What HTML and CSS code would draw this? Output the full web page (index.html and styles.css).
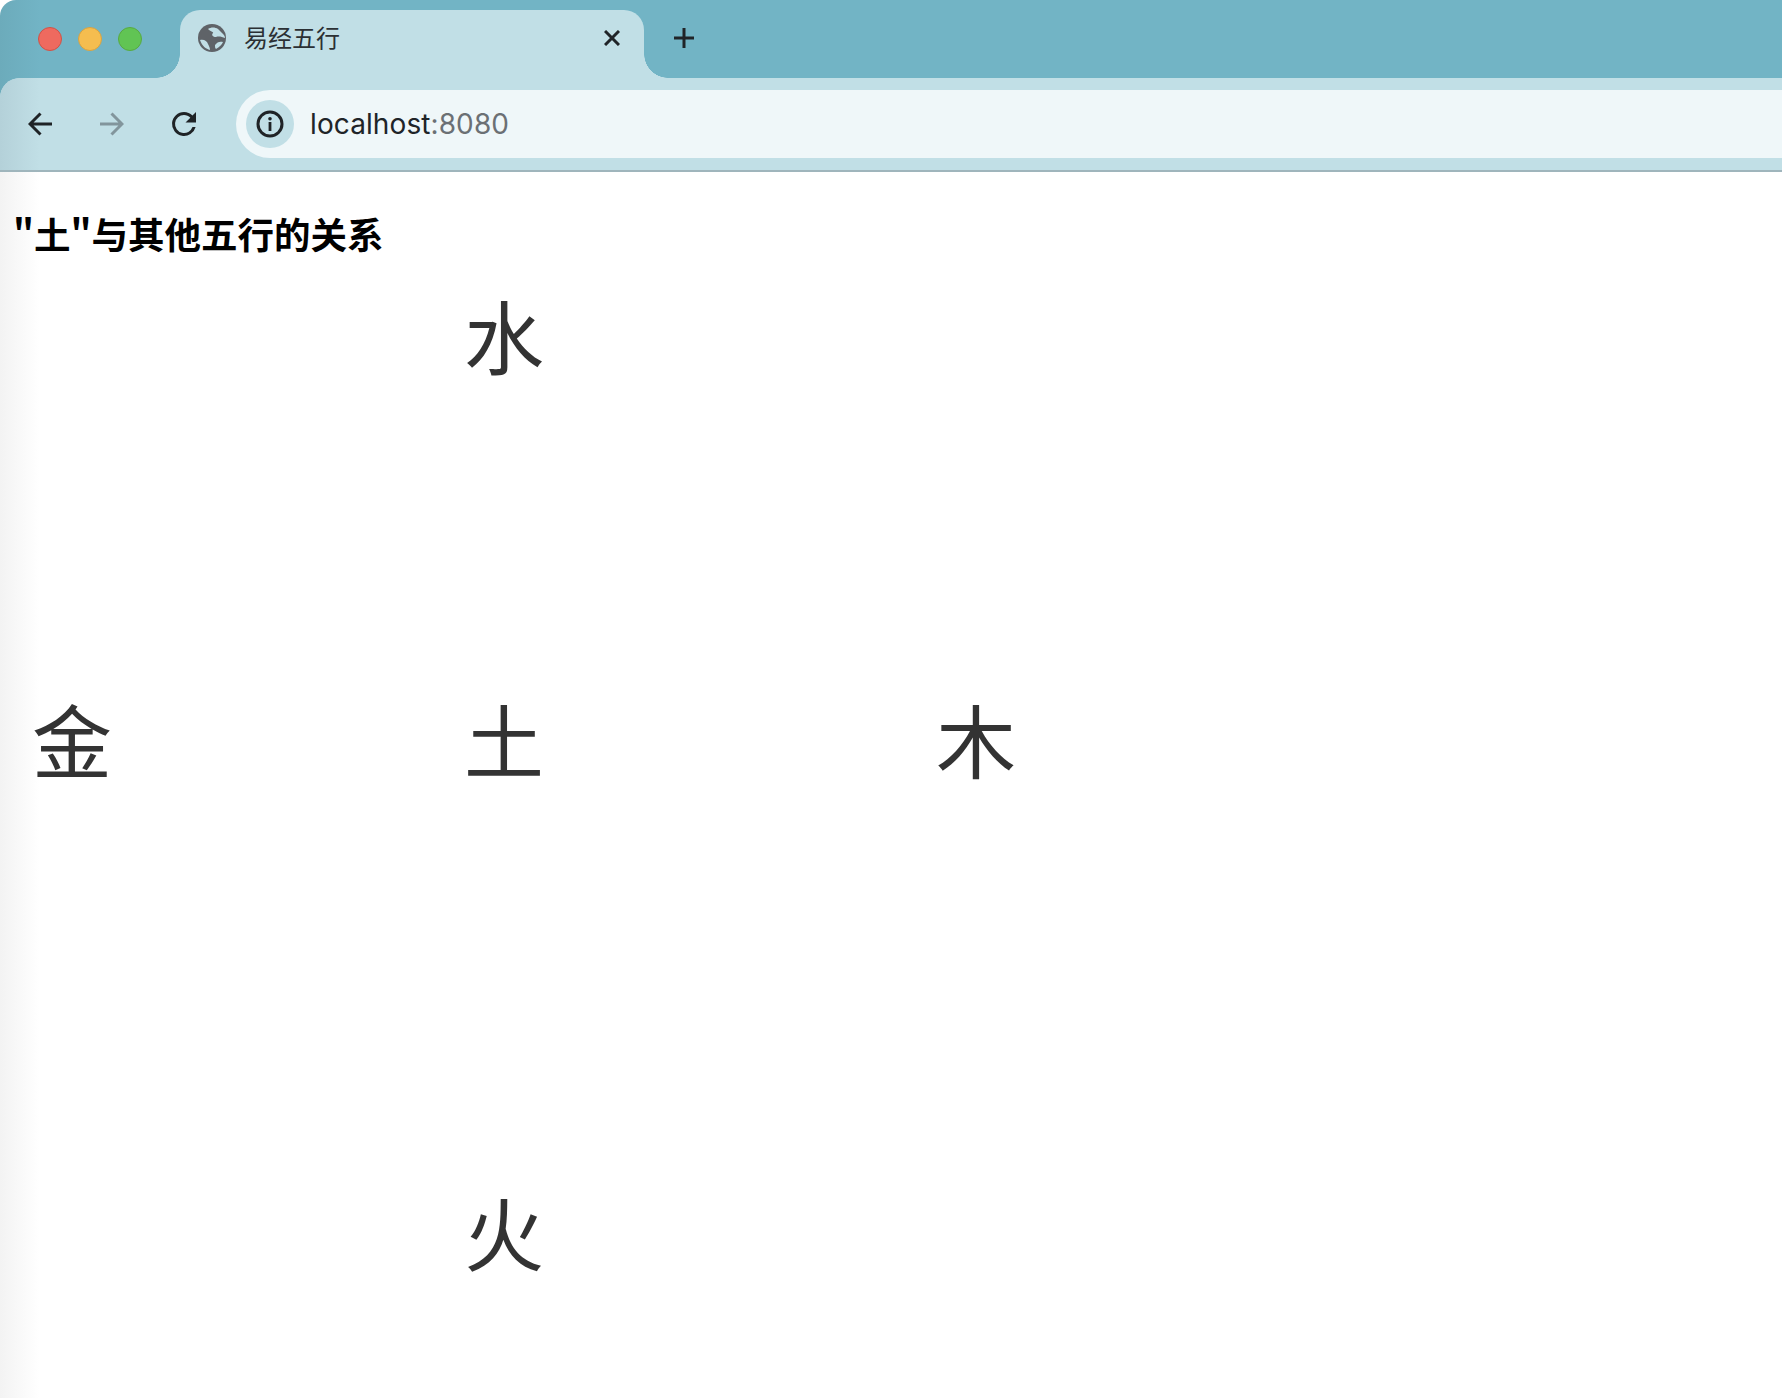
FILE: index.html
```html
<!DOCTYPE html>
<html lang="zh-CN">
<head>
  <meta charset="UTF-8">
  <title>易经五行</title>
  <link rel="stylesheet" href="styles.css">
</head>
<body>

  <header class="browser">
    <div class="strip">
      <div class="lights">
        <span class="light red"></span>
        <span class="light yellow"></span>
        <span class="light green"></span>
      </div>
      <div class="tab">
        <svg class="globe" viewBox="0 0 28 28">
          <circle cx="14" cy="14" r="14" fill="#5f6368"/>
          <path d="M10 5c3-2 7-2 10 0l4 4c2 2 3 3 3 5-3-1-6-2-9-1-3 0-5-2-3-4 1-1-2-1-5-4z" fill="#c1dfe6"/>
          <path d="M2 16c4-1 7 1 8 4 1 2 2 4 2 6-4-1-8-4-10-10z" fill="#c1dfe6"/>
          <path d="M17 21c2-3 5-4 8-3-1 2-3 5-7 7-1-1-1-2-1-4z" fill="#c1dfe6"/>
        </svg>
        <span class="tab-title">易经五行</span>
        <svg class="close" viewBox="0 0 16 16">
          <path d="M1 1l14 14M15 1L1 15"/>
        </svg>
      </div>
      <svg class="plus" viewBox="0 0 20 20">
        <path d="M10 0v20M0 10h20"/>
      </svg>
    </div>

    <div class="toolbar">
      <div class="nav-btn">
        <svg viewBox="0 0 24 24"><path d="M24 12H2M12.500 1.500L2 12l10.500 10.500"/></svg>
      </div>
      <div class="nav-btn off">
        <svg viewBox="0 0 24 24"><path d="M0 12h22M11.500 1.500L22 12 11.500 22.500"/></svg>
      </div>
      <div class="nav-btn">
        <svg class="reload" viewBox="0 0 24 24"><path d="M17.650 6.350A7.950 7.950 0 0 0 12 4a8 8 0 1 0 7.750 10h-2.080A6 6 0 1 1 12 6c1.660 0 3.140.69 4.220 1.780L13 11h7V4l-2.350 2.350z"/></svg>
      </div>
      <div class="address">
        <div class="info">
          <svg viewBox="0 0 28 28">
            <circle cx="14" cy="14" r="12" fill="none" stroke="#1f2326" stroke-width="3"/>
            <circle cx="14" cy="8.800" r="1.800" fill="#1f2326"/>
            <rect x="12.600" y="12" width="2.800" height="9" fill="#1f2326"/>
          </svg>
        </div>
        <span class="host">localhost<em>:8080</em></span>
      </div>
    </div>
  </header>

  <main class="page">
    <h2 class="title">"土"与其他五行的关系</h2>
    <div class="node shui">水</div>
    <div class="node jin">金</div>
    <div class="node tu">土</div>
    <div class="node mu">木</div>
    <div class="node huo">火</div>
  </main>

</body>
</html>
```

FILE: styles.css
```css
* {
  margin: 0;
  padding: 0;
  box-sizing: border-box;
}

html, body {
  height: 100%;
  overflow: hidden;
}

body {
  font-family: "Inter", "Noto Sans CJK SC", sans-serif;
  background-color: #fff;
}

.browser {
  background-color: #72b4c5;
  background-image: linear-gradient(to right, #6cabbb, #72b4c5 40px);
  border-top-left-radius: 16px;
}

.strip {
  height: 78px;
  padding: 10px 0 0 38px;
  display: flex;
}

.lights {
  display: flex;
  gap: 16px;
  padding-top: 17px;
}

.light {
  width: 24px;
  height: 24px;
  border-radius: 50%;
  border: 1px solid;
}

.red {
  background-color: #ee6a5f;
  border-color: #ce5347;
}

.yellow {
  background-color: #f5bd4f;
  border-color: #d6a243;
}

.green {
  background-color: #61c454;
  border-color: #58a942;
}

.tab {
  position: relative;
  width: 464px;
  height: 68px;
  margin-left: 38px;
  padding: 0 24px 12px 18px;
  display: flex;
  align-items: center;
  background-color: #c1dfe6;
  border-radius: 20px 20px 0 0;
}

.tab::before,
.tab::after {
  content: "";
  position: absolute;
  bottom: 0;
  width: 24px;
  height: 24px;
}

.tab::before {
  left: -24px;
  background: radial-gradient(circle at 0 0, transparent 23.5px, #c1dfe6 24px);
}

.tab::after {
  right: -24px;
  background: radial-gradient(circle at 100% 0, transparent 23.5px, #c1dfe6 24px);
}

.globe {
  width: 28px;
  height: 28px;
  flex: none;
}

.tab-title {
  flex: 1;
  margin: 0 0 4px 18px;
  font-family: "Noto Sans CJK SC", sans-serif;
  font-size: 24px;
  color: #2b3034;
}

.close {
  width: 16px;
  height: 16px;
  fill: none;
  stroke: #202428;
  stroke-width: 3;
}

.plus {
  width: 20px;
  height: 20px;
  margin: 18px 0 0 30px;
  fill: none;
  stroke: #202428;
  stroke-width: 3;
}

.toolbar {
  height: 94px;
  padding: 12px 0 12px 4px;
  display: flex;
  align-items: center;
  background-color: #c1dfe6;
  background-image: linear-gradient(to right, #b4d1d9, #c1dfe6 40px);
  border-bottom: 2px solid #9fb5bc;
  border-top-left-radius: 20px;
}

.nav-btn {
  width: 72px;
  display: flex;
  justify-content: center;
}

.nav-btn svg {
  width: 24px;
  height: 24px;
  fill: none;
  stroke: #1f2326;
  stroke-width: 3;
}

.nav-btn.off svg {
  stroke: #82959c;
}

.nav-btn .reload {
  width: 36px;
  height: 36px;
  fill: #1f2326;
  stroke: none;
}

.address {
  flex: 1;
  height: 68px;
  margin-left: 16px;
  padding-left: 10px;
  display: flex;
  align-items: center;
  background-color: #eff7f9;
  border-radius: 34px 0 0 34px;
}

.info {
  width: 48px;
  height: 48px;
  display: flex;
  justify-content: center;
  align-items: center;
  background-color: #c1dfe6;
  border-radius: 50%;
}

.info svg {
  width: 28px;
  height: 28px;
}

.host {
  margin-left: 16px;
  font-size: 28px;
  letter-spacing: 0.1px;
  color: #202428;
}

.host em {
  font-style: normal;
  color: #6b7074;
}

.page {
  position: relative;
  height: 1226px;
  padding: 38px 0 0 13px;
  background-image: linear-gradient(to right, #f3f3f3, #fff 40px);
  overflow: hidden;
}

.title {
  font-family: "Noto Sans CJK SC", sans-serif;
  font-size: 36.500px;
  line-height: 48px;
  font-weight: 700;
  color: #000;
}

/* 五行的节点 */
.node {
  position: absolute;
  width: 80px;
  font-family: "Noto Sans CJK SC", sans-serif;
  font-size: 80px;
  font-weight: 400;
  line-height: 80px;
  text-align: center;
  color: #333;
}

.shui { left: 464px; top: 121px; }
.jin { left: 32px; top: 525px; }
.tu { left: 464px; top: 525px; }
.mu { left: 936px; top: 525px; }
.huo { left: 464px; top: 1018px; }
```
